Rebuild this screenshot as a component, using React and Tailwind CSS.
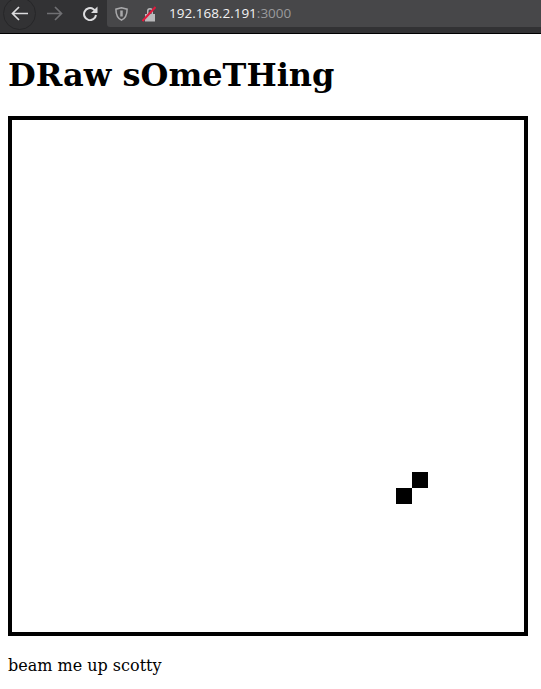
const SERIF = "font-['DejaVu_Serif',serif]";

function Toolbar() {
  return (
    <div className="flex h-[34px] items-start overflow-hidden border-b border-black bg-[#323234]">
      <div className="flex h-[27px] w-[107px] shrink-0 items-center">
        <div className="ml-[3px] flex h-[33px] w-[33px] shrink-0 items-center justify-center rounded-full border border-[#262628] bg-[#323234]">
          <svg width="17" height="15" viewBox="0 0 17 15" fill="none" stroke="#dcdcde" strokeWidth="1.7">
            <path d="M17 7.500H1.500M8 1 1.500 7.500 8 14" />
          </svg>
        </div>
        <svg className="ml-[11px]" width="16" height="15" viewBox="0 0 16 15" fill="none" stroke="#707073" strokeWidth="1.7">
          <path d="M0 7.500h14.500M8 1l6.500 6.500L8 14" />
        </svg>
        <svg className="ml-[19px]" width="16" height="15" viewBox="0 0 16 15" fill="none" stroke="#dcdcde" strokeWidth="2">
          <path d="M14 9A6 6 0 1 1 11.500 3.200l2.500 2" />
          <path d="M15.500 0.500v6.500h-6.500z" fill="#dcdcde" stroke="none" />
        </svg>
      </div>
      <div className="flex h-[27px] flex-1 items-center rounded-bl-[3px] bg-[#474749] pl-[8px]">
        <svg width="13" height="14" viewBox="0 0 13 14" fill="none" stroke="#a9a9ab" strokeWidth="1.500">
          <path d="M6.500 0.800 0.900 2.200C0.900 7.500 2 11 6.500 13.200 11 11 12.100 7.500 12.100 2.200z" />
          <path d="M6.500 3.500v6" strokeWidth="2.500" />
        </svg>
        <svg className="ml-[14px]" width="14" height="16" viewBox="0 0 14 16">
          <path d="M3 8h10v7.500H3zM5 8V5a3 3 0 0 1 6 0v3H9.500V5a1.500 1.500 0 0 0-3 0v3z" fill="#b9b9bb" />
          <path d="M0.500 15 13.500 1" stroke="#e0183c" strokeWidth="2" />
        </svg>
        <span className="ml-[13px] font-['Open_Sans',sans-serif] text-[13.5px] leading-none text-[#f2f2f3]">
          192.168.2.191<span className="text-[#9a9a9c]">:3000</span>
        </span>
      </div>
    </div>
  );
}

export default function App() {
  return (
    <div className={`min-h-[689px] bg-white text-black ${SERIF}`}>
      <Toolbar />
      <div className="px-2">
        <h1 className="mt-[22px] text-[32px] font-bold leading-[38px]">DRaw sOmeTHing</h1>
        <div className="mt-[22px] grid h-[520px] w-[520px] grid-cols-[repeat(32,16px)] grid-rows-[repeat(32,16px)] border-4 border-black">
          <div className="col-start-[26] row-start-[23] bg-black" />
          <div className="col-start-[25] row-start-[24] bg-black" />
        </div>
        <p className="mt-[20px] text-base leading-[19px]">beam me up scotty</p>
      </div>
    </div>
  );
}
